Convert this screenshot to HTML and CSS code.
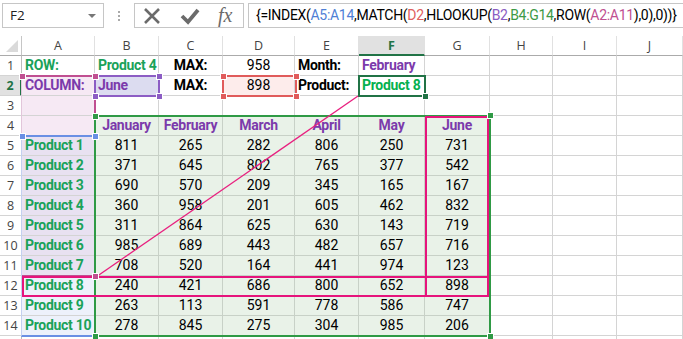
FILE: index.html
```html
<!DOCTYPE html>
<html lang="en">
<head>
  <meta charset="UTF-8">
  <meta name="viewport" content="width=device-width, initial-scale=1.0">
  <link rel="stylesheet" href="styles.css">
  <title>INDEX MATCH HLOOKUP</title>
</head>
<body>
<div class="fbar">
  <div class="namebox">F2<span class="drop"></span></div>
  <div class="grip"><i></i><i></i><i></i></div>
  <div class="fbtns">
    <svg width="18" height="18" viewBox="0 0 18 18"><path d="M2 2 L16 16 M16 2 L2 16" stroke="#6b6b6b" stroke-width="2.6" fill="none"/></svg>
    <svg width="20" height="18" viewBox="0 0 20 18"><path d="M2 9 L8 15 L18 3" stroke="#6b6b6b" stroke-width="3.8" fill="none"/></svg>
    <span class="fx">fx</span>
  </div>
  <div class="formula">{=INDEX(<span class="f-blue">A5:A14</span>,MATCH(<span class="f-red">D2</span>,HLOOKUP(<span class="f-pur">B2</span>,<span class="f-grn">B4:G14</span>,ROW(<span class="f-mag">A2:A11</span>),0),0))}</div>
</div>

<div class="sheet">
  <div class="c hd corner"><span class="tri"></span></div>
  <div class="c hd">A</div><div class="c hd">B</div><div class="c hd">C</div><div class="c hd">D</div><div class="c hd">E</div><div class="c hd sel">F</div><div class="c hd">G</div><div class="c hd">H</div><div class="c hd">I</div><div class="c hd">J</div>

  <div class="c rh">1</div>
  <div class="c lbl grn">ROW:</div><div class="c lbl grn">Product 4</div><div class="c lbl ctr">MAX:</div><div class="c num">958</div><div class="c lbl">Month:</div><div class="c lbl pur">February</div><div class="c"></div><div class="c"></div><div class="c"></div><div class="c"></div>

  <div class="c rh sel">2</div>
  <div class="c lbl pur pk">COLUMN:</div><div class="c lbl pur b2">June</div><div class="c lbl ctr">MAX:</div><div class="c num d2">898</div><div class="c lbl">Product:</div><div class="c lbl grn2">Product 8</div><div class="c"></div><div class="c"></div><div class="c"></div><div class="c"></div>

  <div class="c rh">3</div>
  <div class="c pk"></div><div class="c"></div><div class="c"></div><div class="c"></div><div class="c"></div><div class="c"></div><div class="c"></div><div class="c"></div><div class="c"></div><div class="c"></div>

  <div class="c rh">4</div>
  <div class="c pk"></div><div class="c t th">January</div><div class="c t th">February</div><div class="c t th">March</div><div class="c t th">April</div><div class="c t th">May</div><div class="c t th">June</div><div class="c"></div><div class="c"></div><div class="c"></div>

  <div class="c rh">5</div>
  <div class="c lbl grn lv">Product 1</div><div class="c t num">811</div><div class="c t num">265</div><div class="c t num">282</div><div class="c t num">806</div><div class="c t num">250</div><div class="c t num">731</div><div class="c"></div><div class="c"></div><div class="c"></div>

  <div class="c rh">6</div>
  <div class="c lbl grn lv">Product 2</div><div class="c t num">371</div><div class="c t num">645</div><div class="c t num">802</div><div class="c t num">765</div><div class="c t num">377</div><div class="c t num">542</div><div class="c"></div><div class="c"></div><div class="c"></div>

  <div class="c rh">7</div>
  <div class="c lbl grn lv">Product 3</div><div class="c t num">690</div><div class="c t num">570</div><div class="c t num">209</div><div class="c t num">345</div><div class="c t num">165</div><div class="c t num">167</div><div class="c"></div><div class="c"></div><div class="c"></div>

  <div class="c rh">8</div>
  <div class="c lbl grn lv">Product 4</div><div class="c t num">360</div><div class="c t num">958</div><div class="c t num">201</div><div class="c t num">605</div><div class="c t num">462</div><div class="c t num">832</div><div class="c"></div><div class="c"></div><div class="c"></div>

  <div class="c rh">9</div>
  <div class="c lbl grn lv">Product 5</div><div class="c t num">311</div><div class="c t num">864</div><div class="c t num">625</div><div class="c t num">630</div><div class="c t num">143</div><div class="c t num">719</div><div class="c"></div><div class="c"></div><div class="c"></div>

  <div class="c rh">10</div>
  <div class="c lbl grn lv">Product 6</div><div class="c t num">985</div><div class="c t num">689</div><div class="c t num">443</div><div class="c t num">482</div><div class="c t num">657</div><div class="c t num">716</div><div class="c"></div><div class="c"></div><div class="c"></div>

  <div class="c rh">11</div>
  <div class="c lbl grn lv">Product 7</div><div class="c t num">708</div><div class="c t num">520</div><div class="c t num">164</div><div class="c t num">441</div><div class="c t num">974</div><div class="c t num">123</div><div class="c"></div><div class="c"></div><div class="c"></div>

  <div class="c rh">12</div>
  <div class="c lbl grn bl">Product 8</div><div class="c t num">240</div><div class="c t num">421</div><div class="c t num">686</div><div class="c t num">800</div><div class="c t num">652</div><div class="c t num">898</div><div class="c"></div><div class="c"></div><div class="c"></div>

  <div class="c rh">13</div>
  <div class="c lbl grn bl">Product 9</div><div class="c t num">263</div><div class="c t num">113</div><div class="c t num">591</div><div class="c t num">778</div><div class="c t num">586</div><div class="c t num">747</div><div class="c"></div><div class="c"></div><div class="c"></div>

  <div class="c rh">14</div>
  <div class="c lbl grn bl">Product 10</div><div class="c t num">278</div><div class="c t num">845</div><div class="c t num">275</div><div class="c t num">304</div><div class="c t num">985</div><div class="c t num">206</div><div class="c"></div><div class="c"></div><div class="c"></div>

  <div class="c rh"></div>
  <div class="c"></div><div class="c"></div><div class="c"></div><div class="c"></div><div class="c"></div><div class="c"></div><div class="c"></div><div class="c"></div><div class="c"></div><div class="c"></div>

  <!-- range highlights drawn over the grid -->
  <div class="rng r-mag"></div>
  <div class="rng r-blue"></div>
  <div class="rng r-grn"></div>
  <div class="rng r-pur"></div>
  <div class="rng r-red"></div>
  <div class="rng active"></div>
  <div class="mark m-col"></div>
  <div class="mark m-row"></div>
  <svg class="arrow" width="683" height="303"><line x1="358" y1="60" x2="96" y2="241" stroke="#e8207f" stroke-width="1.3"/></svg>

  <span class="h h-mag" style="left:20px;top:38px"></span>
  <span class="h h-mag" style="left:93px;top:38px"></span>
  <span class="h h-mag" style="left:93px;top:238px"></span>
  <span class="h h-pur" style="left:157px;top:38px"></span>
  <span class="h h-pur" style="left:93px;top:58px"></span>
  <span class="h h-pur" style="left:157px;top:58px"></span>
  <span class="h h-red" style="left:221px;top:38px"></span>
  <span class="h h-red" style="left:294px;top:38px"></span>
  <span class="h h-red" style="left:221px;top:58px"></span>
  <span class="h h-red" style="left:294px;top:58px"></span>
  <span class="h h-grn" style="left:93px;top:78px"></span>
  <span class="h h-grn" style="left:488px;top:77px"></span>
  <span class="h h-grn" style="left:93px;top:298px"></span>
  <span class="h h-grn" style="left:488px;top:298px"></span>
  <span class="h h-blue" style="left:20px;top:98px"></span>
  <span class="h h-blue" style="left:93px;top:98px"></span>
  <span class="h h-dk" style="left:423px;top:58px"></span>
</div>
</body>
</html>
```

FILE: styles.css
```css
*{
  box-sizing:border-box;
}
body{
  margin:0;
  background:#fff;
  font-family:Roboto, "Liberation Sans", sans-serif;
  overflow:hidden;
}
.fbar{
  height:36px;
  display:flex;
  align-items:flex-start;
  padding-top:3px;
  padding-left:2px;
}
.namebox{
  flex:none;
  width:102px;
  height:25px;
  border:1px solid #c6c6c6;
  font-family:"Open Sans", sans-serif;
  font-size:13.5px;
  color:#222;
  padding:2px 0 0 7px;
  position:relative;
}
.drop{
  position:absolute;
  right:7px;
  top:10px;
  border-left:4px solid transparent;
  border-right:4px solid transparent;
  border-top:4px solid #777;
}
.grip{
  flex:none;
  width:30px;
  height:25px;
  display:flex;
  flex-direction:column;
  align-items:center;
  justify-content:center;
  gap:2px;
}
.grip i{
  width:2px;
  height:2px;
  background:#aaa;
}
.fbtns{
  flex:none;
  width:110px;
  height:25px;
  border:1px solid #c6c6c6;
  display:flex;
  align-items:center;
  gap:19px;
  padding-left:8px;
}
.fx{
  font-family:"Liberation Serif", serif;
  font-style:italic;
  font-size:20px;
  color:#6b6b6b;
  margin-left:-1px;
}
.formula{
  margin-left:4px;
  flex:1;
  min-width:0;
  height:25px;
  border:1px solid #c6c6c6;
  border-right:none;
  font-size:14px;
  letter-spacing:-0.3px;
  color:#000;
  padding:3px 0 0 7px;
  white-space:nowrap;
  overflow:hidden;
}
.f-blue{ color:#4f7fd6; }
.f-red{ color:#e0605e; }
.f-pur{ color:#8a5cc2; }
.f-grn{ color:#3d9a45; }
.f-mag{ color:#c04f91; }

.sheet{
  position:relative;
  display:grid;
  grid-template-columns:22px 73px 64px 64px 72px 64px 66px 65px 63px 64px 66px;
  grid-auto-rows:20px;
  height:303px;
  overflow:hidden;
}
.c{
  border-right:1px solid #d4d4d4;
  border-bottom:1px solid #d4d4d4;
  font-size:14px;
  line-height:19px;
  padding:0 3px;
  white-space:nowrap;
  overflow:hidden;
  color:#000;
}
.hd{
  text-align:center;
  font-family:"Open Sans", sans-serif;
  font-size:12.5px;
  color:#444;
  border-bottom:1px solid #ababab;
  border-right:1px solid #e1e1e1;
  line-height:20px;
}
.hd.sel{
  background:#e1e1e1;
  color:#217346;
  font-weight:bold;
  border-bottom:2px solid #217346;
}
.corner{
  position:relative;
  border-right:1px solid #c6c6c6;
}
.tri{
  position:absolute;
  right:3px;
  bottom:3px;
  border-left:12px solid transparent;
  border-bottom:12px solid #dadada;
}
.rh{
  text-align:center;
  font-family:"Open Sans", sans-serif;
  font-size:12.5px;
  color:#444;
  border-right:1px solid #bcbcbc;
  padding:0;
  line-height:20px;
}
.rh.sel{
  background:#e1e1e1;
  color:#217346;
  font-weight:bold;
  border-right:2px solid #217346;
}
.lbl{
  font-weight:bold;
  letter-spacing:-0.3px;
}
.ctr,.num,.th{
  text-align:center;
}
.grn{ color:#1aa25a; }
.grn2{ color:#05b14f; }
.pur,.th{ color:#7b3aab; }
.th{
  font-weight:bold;
  letter-spacing:-0.3px;
}
.t{
  background:#e9f2e8;
  border-color:#c8d1c7;
}
.pk{ background:#f6e9f4; }
.lv{ background:#e8e1f1; }
.bl{ background:#edf1fb; }
.b2{ background:#dcdcf0; }
.d2{ background:#fdeceb; }

.rng{
  position:absolute;
  border:2px solid;
  pointer-events:none;
}
.r-mag{ left:21px; top:39px; width:75px; height:202px; border-color:#c04f91; border-left:1px solid #e2c6da; }
.r-blue{ left:21px; top:99px; width:75px; height:202px; border-color:#6a8fe4; border-right:none; border-left:1px solid #c3d0f0; }
.r-grn{ left:94px; top:79px; width:397px; height:222px; border-color:#2f9a45; }
.r-pur{ left:94px; top:39px; width:66px; height:22px; border-color:#8c5dc4; }
.r-red{ left:222px; top:39px; width:75px; height:22px; border-color:#e05b5b; }
.active{ left:358px; top:39px; width:68px; height:22px; border-color:#217346; }
.mark{
  position:absolute;
  border:2px solid #e6147c;
}
.m-col{ left:425px; top:80px; width:64px; height:181px; }
.m-row{ left:22px; top:240px; width:467px; height:21px; }
.arrow{
  position:absolute;
  left:0;
  top:0;
}
.h{
  position:absolute;
  width:5px;
  height:5px;
  outline:1px solid #fff;
}
.h-mag{ background:#c04f91; }
.h-pur{ background:#8c5dc4; }
.h-red{ background:#e05b5b; }
.h-grn{ background:#2f9a45; }
.h-blue{ background:#6a8fe4; }
.h-dk{ background:#217346; }
```
